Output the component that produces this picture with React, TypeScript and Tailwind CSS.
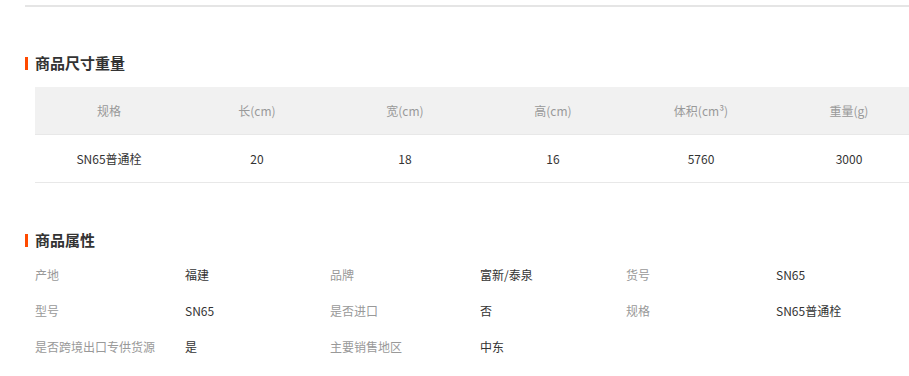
import React from 'react';

const sizeHead = ['规格', '长(cm)', '宽(cm)', '高(cm)', '体积(cm³)', '重量(g)'];
const sizeRow = ['SN65普通栓', '20', '18', '16', '5760', '3000'];

const attrs: [string, string][][] = [
  [['产地', '福建'], ['品牌', '富新/泰泉'], ['货号', 'SN65']],
  [['型号', 'SN65'], ['是否进口', '否'], ['规格', 'SN65普通栓']],
  [['是否跨境出口专供货源', '是'], ['主要销售地区', '中东']],
];

const SectionTitle = ({ children }: { children: React.ReactNode }) => (
  <div className="flex items-center h-[20px]">
    <span className="w-[3px] h-[13px] bg-[#ff4a00]" />
    <span className="ml-[7px] text-[15px] leading-[20px] font-bold text-[#333]">{children}</span>
  </div>
);

const App: React.FC = () => {
  return (
    <div className="w-[909px] h-[376px] overflow-hidden bg-white pt-[5px] pl-[25px] font-['Noto_Sans_CJK_SC','Microsoft_YaHei',sans-serif]">
      <div className="h-[2px] bg-[#e5e5e5]" />

      {/* 商品尺寸重量 */}
      <div className="mt-[46px]">
        <SectionTitle>商品尺寸重量</SectionTitle>
      </div>
      <div className="mt-[14px] ml-[10px] w-[888px] text-[12px]">
        <div className="flex h-[48px] bg-[#f1f1f1] border-b border-[#e8e8e8]">
          {sizeHead.map((h) => (
            <div key={h} className="w-[148px] flex items-center justify-center text-[#999]">{h}</div>
          ))}
        </div>
        <div className="flex h-[48px] border-b border-[#e8e8e8]">
          {sizeRow.map((v, i) => (
            <div key={i} className="w-[148px] flex items-center justify-center text-[#333]">{v}</div>
          ))}
        </div>
      </div>

      {/* 商品属性 */}
      <div className="mt-[47px]">
        <SectionTitle>商品属性</SectionTitle>
      </div>
      <div className="mt-[7px] ml-[10px] text-[12px]">
        {attrs.map((row, r) => (
          <div key={r} className="grid grid-cols-[150px_145px_150px_146px_150px_1fr] h-[36px] items-center">
            {row.map(([k, v]) => (
              <React.Fragment key={k}>
                <div className="text-[#999] whitespace-nowrap">{k}</div>
                <div className="text-[#333] whitespace-nowrap">{v}</div>
              </React.Fragment>
            ))}
          </div>
        ))}
      </div>
    </div>
  );
};

export default App;
